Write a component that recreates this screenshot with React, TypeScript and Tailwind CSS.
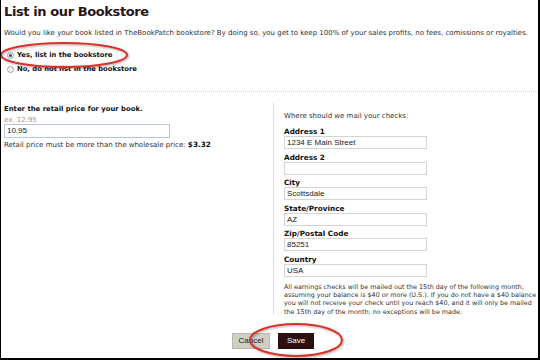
import React from "react";

function Field({ label, value }: { label: string; value: string }) {
  return (
    <div className="flex flex-col">
      <div className="text-[7.3px] font-bold leading-[9px] text-[#111]">{label}</div>
      <div className="w-[143px] h-[13px] border border-[#d4d4d4] bg-white pl-[2px] text-[8px] leading-[11px] text-[#222] font-['Liberation_Sans',sans-serif]">
        {value}
      </div>
    </div>
  );
}

function Radio({ checked }: { checked?: boolean }) {
  return (
    <span className="inline-flex items-center justify-center w-[7px] h-[7px] rounded-full border border-[#9aa6b4] bg-[#f4f4f4] mr-[3px]">
      {checked ? <span className="w-[3px] h-[3px] rounded-full bg-[#2d4f7c]" /> : null}
    </span>
  );
}

export default function App() {
  return (
    <div className="relative w-[540px] h-[360px] bg-white border-l border-r-2 border-b-2 border-black overflow-hidden font-['DejaVu_Sans',sans-serif] text-[#333]">
      <div className="pl-[3px] pt-[4px]">
        <h1 className="text-[13px] font-bold leading-[16px] tracking-[-0.4px] text-[#2a1515]">List in our Bookstore</h1>
        <p className="mt-[9px] text-[7px] leading-[9px] text-[#333] whitespace-nowrap">
          Would you like your book listed in TheBookPatch bookstore? By doing so, you get to keep 100% of your sales profits, no fees, comissions or royalties.
        </p>
        <div className="mt-[13px] flex flex-col gap-[5px] pl-[3px]">
          <div className="flex items-center text-[6.8px] font-bold leading-[9px] text-[#111]">
            <Radio checked />
            Yes, list in the bookstore
          </div>
          <div className="flex items-center text-[6.8px] font-bold leading-[9px] text-[#111]">
            <Radio />
            No, do not list in the bookstore
          </div>
        </div>
      </div>

      <div className="mt-[17px] border-t border-dotted border-[#cfcfcf]" />

      <div className="flex">
        <div className="w-[272px] shrink-0 pl-[3px] pt-[13px]">
          <div className="text-[6.9px] font-bold leading-[9px] text-[#111]">Enter the retail price for your book.</div>
          <div className="mt-[2px] text-[7px] leading-[8px] text-[#999]">ex. 12.95</div>
          <div className="w-[166px] h-[14px] border border-[#b9c8d8] pl-[2px] text-[8px] leading-[12px] text-[#222] font-['Liberation_Sans',sans-serif]">
            10.95
          </div>
          <div className="mt-[2px] text-[7px] leading-[9px] text-[#333] whitespace-nowrap">
            Retail price must be more than the wholesale price: <span className="font-bold text-[7.3px] text-[#111]">$3.32</span>
          </div>
        </div>
        <div className="mt-[11px] border-l border-[#dcdcdc] pl-[10px] pt-[9px] h-[212px] flex-1 min-w-0">
          <div className="text-[7px] leading-[9px] text-[#333]">Where should we mail your checks:</div>
          <div className="mt-[6px] flex flex-col gap-[3.5px]">
            <Field label="Address 1" value="1234 E Main Street" />
            <Field label="Address 2" value="" />
            <Field label="City" value="Scottsdale" />
            <Field label="State/Province" value="AZ" />
            <Field label="Zip/Postal Code" value="85251" />
            <Field label="Country" value="USA" />
          </div>
          <p className="mt-[6px] text-[6.4px] leading-[8.4px] text-[#333] whitespace-nowrap">
            All earnings checks will be mailed out the 15th day of the following month,
            <br />
            assuming your balance is $40 or more (U.S.). If you do not have a $40 balance
            <br />
            you will not receive your check until you reach $40, and it will only be mailed
            <br />
            the 15th day of the month; no exceptions will be made.
          </p>
        </div>
      </div>

      <div className="mt-[18px] flex justify-center gap-[8px] pl-[7px]">
        <button className="w-[38px] h-[16px] bg-[#cfcfc6] border border-[#b8b8ae] text-[8px] text-[#222] font-['Liberation_Sans',sans-serif] leading-[14px]">
          Cancel
        </button>
        <button className="w-[36px] h-[16px] bg-[#2c1010] text-[8px] text-white font-['Liberation_Sans',sans-serif] leading-[16px]">
          Save
        </button>
      </div>

      <svg className="absolute left-0 top-0 pointer-events-none" width="540" height="360">
        <defs>
          <filter id="sh" x="-20%" y="-20%" width="140%" height="140%">
            <feDropShadow dx="1" dy="1" stdDeviation="1" floodColor="#000" floodOpacity="0.35" />
          </filter>
        </defs>
        <ellipse cx="63" cy="55" rx="63" ry="12" fill="none" stroke="#d8302a" strokeWidth="2" filter="url(#sh)" />
        <ellipse cx="295" cy="340" rx="46" ry="16" fill="none" stroke="#d8302a" strokeWidth="2" filter="url(#sh)" />
      </svg>
    </div>
  );
}
